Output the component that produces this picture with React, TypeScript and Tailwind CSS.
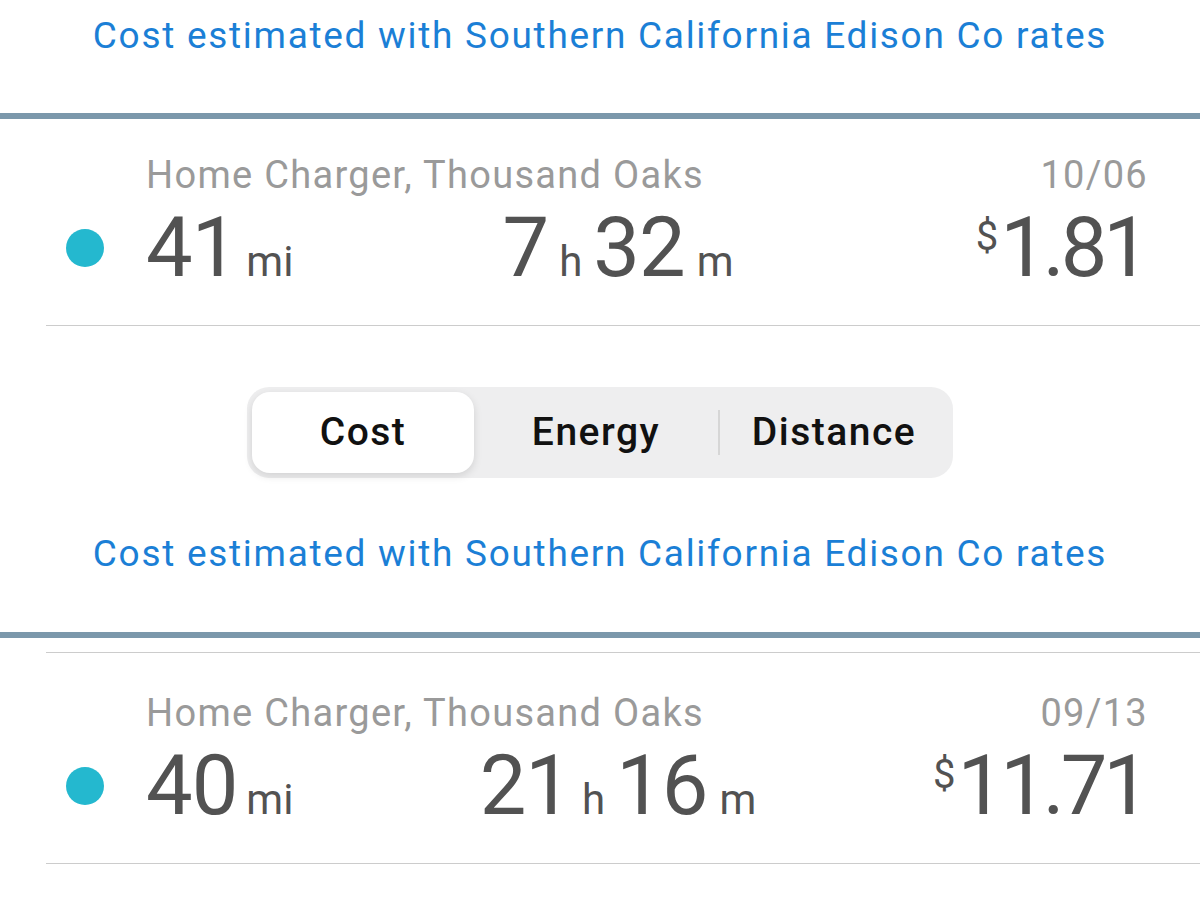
import React from 'react';

type Session = {
  place: string;
  date: string;
  miles: string;
  hours: string;
  minutes: string;
  cost: string;
};

const sessions: Session[] = [
  { place: 'Home Charger, Thousand Oaks', date: '10/06', miles: '41', hours: '7', minutes: '32', cost: '1.81' },
  { place: 'Home Charger, Thousand Oaks', date: '09/13', miles: '40', hours: '21', minutes: '16', cost: '11.71' },
];

const font = { fontFamily: 'Roboto, "Liberation Sans", sans-serif' };

// note about rates, shown above every list
const RateNote = ({ className }: { className?: string }) => (
  <div className={`text-center text-[37px] leading-[48px] tracking-[1.7px] text-[#1b7fd6] ${className ?? ''}`}>
    Cost estimated with Southern California Edison Co rates
  </div>
);

const SessionRow = ({ s, top }: { s: Session; top?: boolean }) => (
  <div className={`ml-[46px] border-b border-[#cccccc] ${top ? 'border-t pt-[40px]' : 'pt-[36px]'} pb-[36px]`}>
    <div className="flex justify-between pl-[100px] pr-[52px] text-[38px] leading-[40px] tracking-[1.3px] text-[#9a9a9a]">
      <span>{s.place}</span>
      <span>{s.date}</span>
    </div>
    <div className="mt-[11px] flex items-center pr-[54px] text-[#525252]">
      <div className="w-[100px] pl-[20px]">
        <div className="h-[38px] w-[38px] rounded-full bg-[#24b8cf]" />
      </div>
      <div className="flex w-[300px] items-baseline">
        <span className="text-[83px] leading-none tracking-[-1px]">{s.miles}</span>
        <span className="ml-[9px] text-[42px] leading-none">mi</span>
      </div>
      <div className="flex w-[344px] items-baseline justify-center">
        <span className="text-[83px] leading-none tracking-[-1px]">{s.hours}</span>
        <span className="mx-[11px] text-[42px] leading-none">h</span>
        <span className="text-[83px] leading-none tracking-[-1px]">{s.minutes}</span>
        <span className="ml-[12px] text-[42px] leading-none">m</span>
      </div>
      <div className="flex flex-1 items-start justify-end">
        <span className="mt-[11px] mr-[2px] text-[40px] leading-none">$</span>
        <span className="text-[83px] leading-none tracking-[-4px]">{s.cost}</span>
      </div>
    </div>
  </div>
);

const Segmented = () => (
  <div className="mx-auto flex h-[91px] w-[706px] items-center rounded-[22px] bg-[#eeeeef] p-[5px] text-[39px] font-medium tracking-[1.5px] text-[#111111]">
    <div className="flex h-[81px] w-[222px] items-center justify-center rounded-[18px] bg-white shadow-[0_3px_8px_rgba(0,0,0,0.12)]">
      Cost
    </div>
    <div className="flex w-[244px] items-center justify-center">Energy</div>
    <div className="h-[45px] w-[2px] bg-[#d6d6d6]" />
    <div className="flex flex-1 items-center justify-center">Distance</div>
  </div>
);

export default function App() {
  return (
    <div className="h-[900px] w-[1200px] overflow-hidden bg-white" style={font}>
      <div className="h-[113px] pt-[12px]">
        <RateNote />
      </div>
      <div className="h-[6px] bg-[#7b98ab]" />
      <SessionRow s={sessions[0]} />
      <div className="mt-[61px]">
        <Segmented />
      </div>
      <RateNote className="mt-[52px]" />
      <div className="mt-[54px] h-[6px] bg-[#7b98ab]" />
      <div className="mt-[14px]">
        <SessionRow s={sessions[1]} top />
      </div>
    </div>
  );
}
